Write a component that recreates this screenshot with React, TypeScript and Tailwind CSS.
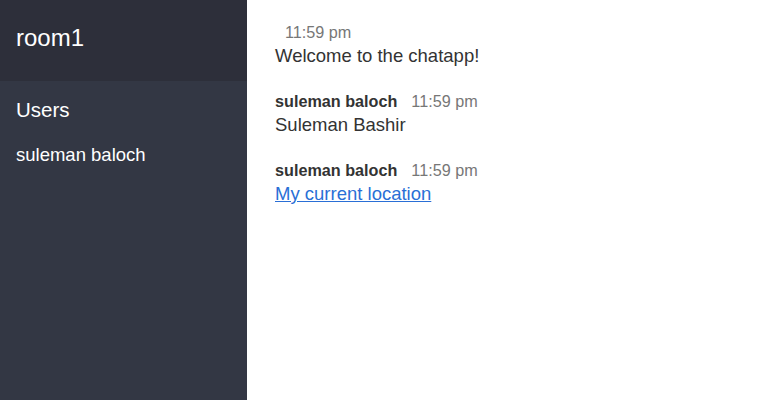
import React from "react";

type Msg = { name: string; time: string; text: string; link?: boolean };

const messages: Msg[] = [
  { name: "", time: "11:59 pm", text: "Welcome to the chatapp!" },
  { name: "suleman baloch", time: "11:59 pm", text: "Suleman Bashir" },
  { name: "suleman baloch", time: "11:59 pm", text: "My current location", link: true },
];

export default function App() {
  return (
    <div className="flex h-[400px] w-full font-['Liberation_Sans',Arial,sans-serif] overflow-hidden">
      {/* Sidebar */}
      <aside className="w-[247px] shrink-0 bg-[#333744] text-white">
        <h2 className="h-[81px] bg-[#2d2f3a] px-4 pt-[26px] text-[24px] leading-[24px] font-normal">room1</h2>
        <h3 className="px-4 pt-[17px] text-[20.5px] leading-[24px] font-normal">Users</h3>
        <ul className="px-4 mt-[23px]">
          <li className="text-[18.5px] leading-[20px] font-light">suleman baloch</li>
        </ul>
      </aside>

      {/* Messages */}
      <main className="flex-1 bg-white pl-[28px] pt-[22px]">
        <ol className="flex flex-col gap-[25px]">
          {messages.map((m, i) => (
            <li key={i}>
              <p className="h-[20px] leading-[20px] text-[16.2px]">
                {m.name ? (
                  <span className="font-bold text-[#333] mr-[14px]">{m.name}</span>
                ) : (
                  <span className="mr-[10px]" />
                )}
                <span className="text-[#777]">{m.time}</span>
              </p>
              <p className="mt-[4px] text-[18.5px] leading-[20px] text-[#333]">
                {m.link ? (
                  <a href="#" className="text-[#2a6fd6] underline">{m.text}</a>
                ) : (
                  m.text
                )}
              </p>
            </li>
          ))}
        </ol>
      </main>
    </div>
  );
}
